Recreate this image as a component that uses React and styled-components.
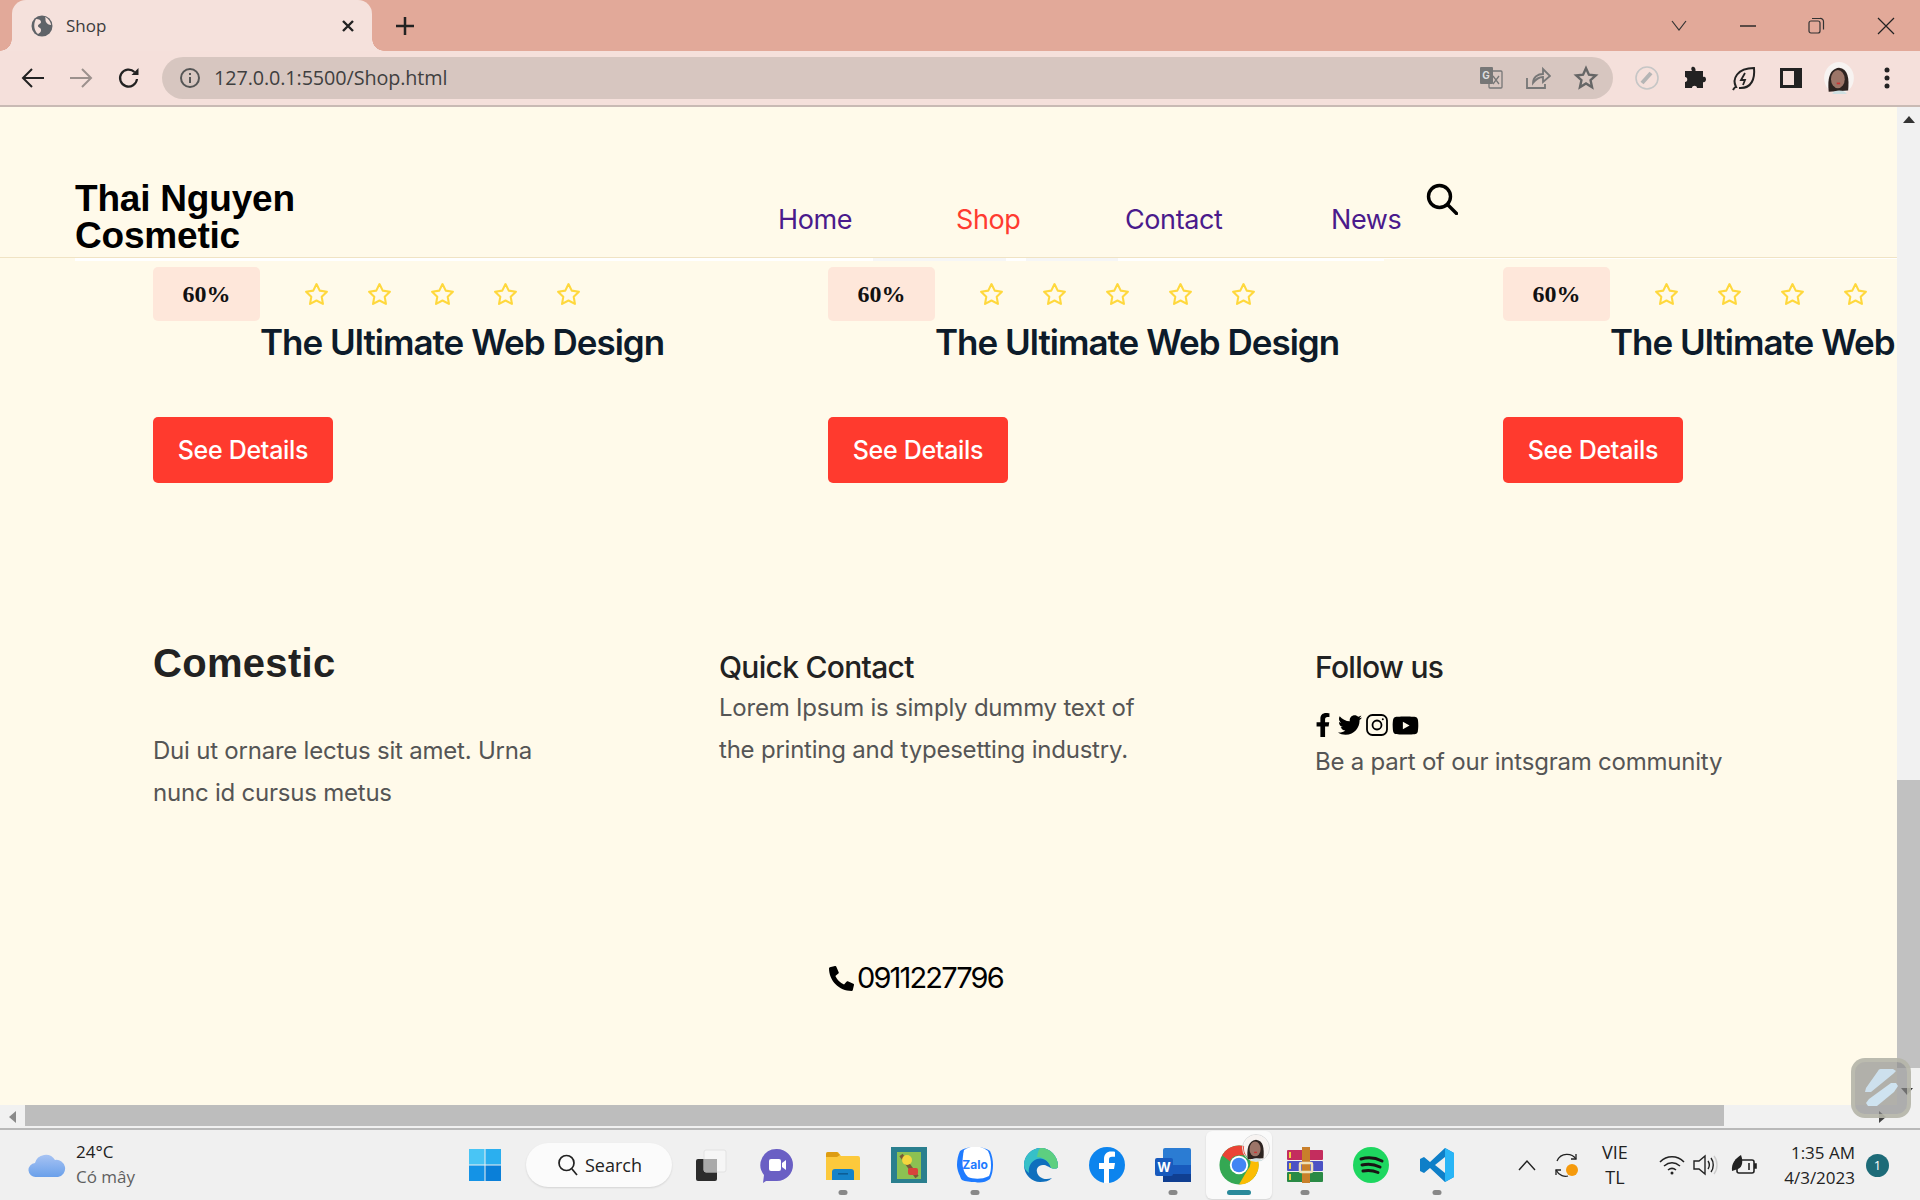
import React from "react";
import styled, { createGlobalStyle } from "styled-components";
import { FaFacebookF, FaTwitter, FaYoutube, FaPhoneAlt } from "react-icons/fa";
import { FiStar } from "react-icons/fi";

const Global = createGlobalStyle`
  html, body { margin: 0; padding: 0; height: 100%; overflow: hidden; }
  #root { height: 100%; }
  * { box-sizing: border-box; }
`;

const Screen = styled.div`
  width: 1920px; height: 1200px; display: flex; flex-direction: column;
  font-family: "Inter", "Liberation Sans", sans-serif; position: relative; overflow: hidden;
`;
const TabStrip = styled.div`
  height: 51px; background: #e2a999; display: flex; align-items: flex-end; padding-left: 12px; flex-shrink: 0;
`;
const Tab = styled.div`
  width: 360px; height: 51px; background: #f5e1dc; border-radius: 14px 14px 0 0; display: flex; align-items: center;
  padding: 0 17px 0 19px; position: relative; gap: 13px; color: #3c3c3c;
  font: 17px "Open Sans", sans-serif;
  &::before, &::after { content: ""; position: absolute; bottom: 0; width: 12px; height: 12px; }
  &::before { left: -12px; background: radial-gradient(circle at 0 0, #e2a999 11.5px, #f5e1dc 12px); }
  &::after { right: -12px; background: radial-gradient(circle at 100% 0, #e2a999 11.5px, #f5e1dc 12px); }
`;
const TabTitle = styled.span`flex: 1;`;
const NewTab = styled.div`margin-left: 19px; width: 28px; height: 51px; display: flex; align-items: center; justify-content: center;`;
const WinControls = styled.div`margin-left: auto; display: flex; align-items: center; height: 51px;`;
const WinBtn = styled.div`width: 69px; height: 44px; display: flex; align-items: center; justify-content: center;`;

const Toolbar = styled.div`
  height: 56px; background: #f5e0db; border-bottom: 2px solid #c9bab4; display: flex; align-items: center; flex-shrink: 0; padding: 0 0 1px 9px;
`;
const NavGlyph = styled.div`width: 48px; height: 40px; display: flex; align-items: center; justify-content: center;`;
const Omnibox = styled.div`
  width: 1451px; height: 42px; background: #d7c6c0; border-radius: 21px; margin-left: 9px; display: flex; align-items: center;
  padding: 0 14px 0 17px; color: #3f3f3f; font: 19.8px "Open Sans", sans-serif; gap: 13px;
`;
const Url = styled.span`flex: 1; letter-spacing: -0.1px;`;
const OmniIcons = styled.div`display: flex; align-items: center; gap: 22px;`;
const Extensions = styled.div`display: flex; align-items: center; margin-left: 10px;`;
const ExtSlot = styled.div`width: 48px; display: flex; align-items: center; justify-content: center;`;

const Viewport = styled.div`flex: 1; display: flex; min-height: 0; background: #fffaea;`;
const Content = styled.main`flex: 1; min-width: 0; overflow: hidden; display: flex; flex-direction: column;`;
const Header = styled.header`
  height: 151px; flex-shrink: 0; border-bottom: 1px solid #f0e3c4; padding: 73px 0 0 75px; display: flex; position: relative;
`;
const Logo = styled.div`
  width: 300px; font: 700 37px/37px "Liberation Sans", sans-serif; color: #000; letter-spacing: -0.2px; margin-right: 403px;
`;
const Nav = styled.nav`display: flex; align-items: flex-start; padding-top: 23px;`;
const NavLink = styled.a`
  font-size: 27px; font-weight: 400; line-height: 34px; color: ${p => (p.$active ? "#ff3b30" : "#4a1a8c")}; width: ${p => p.$w}px; letter-spacing: -0.4px;
`;
const SearchWrap = styled.div`margin-top: -20px;`;
const WhiteLine = styled.div`
  height: 3px; flex-shrink: 0; margin-left: 75px;
  background:
    linear-gradient(rgba(0,0,0,.035) 0 0) 798px 0 / 133px 3px no-repeat,
    linear-gradient(rgba(0,0,0,.035) 0 0) 951px 0 / 92px 3px no-repeat,
    linear-gradient(#fff 0 0) 0 0 / 1309px 3px no-repeat,
    linear-gradient(#fff 0 0) 0 0 / 100% 1px no-repeat;
`;

const CardRow = styled.section`display: flex; padding: 6px 0 0 153px; flex-shrink: 0;`;
const Card = styled.article`width: 675px; flex-shrink: 0; display: flex; flex-direction: column;`;
const TopLine = styled.div`display: flex; align-items: center; height: 54px;`;
const Badge = styled.div`
  width: 107px; height: 54px; border-radius: 5px; background: #fee7da; display: flex; align-items: center; justify-content: center;
  font: 700 24px "Liberation Serif", serif; color: #111; flex-shrink: 0;
`;
const Stars = styled.div`display: flex; margin-left: 44px; gap: 38px; color: #ffd83d;`;
const Title = styled.h3`
  margin: 0 0 0 107px; white-space: nowrap; font-size: 35px; font-weight: 600; line-height: 42px; color: #0d1b2a; letter-spacing: -1px;
`;
const DetailsButton = styled.a`
  margin-top: 54px; width: 180px; height: 66px; background: #ff3a2e; border-radius: 5px; color: #fff; display: flex; align-items: center; justify-content: center;
  font-size: 25px; font-weight: 500; letter-spacing: -0.3px;
`;

const Footer = styled.footer`display: flex; padding: 165px 0 0 153px; flex-shrink: 0;`;
const Col = styled.div`width: ${p => p.$w}px; flex-shrink: 0;`;
const Brand = styled.h2`
  margin: -9px 0 43px; font: 700 40px/48px "Liberation Sans", sans-serif; color: #222; letter-spacing: 0.3px;
`;
const ColTitle = styled.h4`margin: 0 0 1px; font-size: 30px; font-weight: 500; line-height: 38px; color: #222; letter-spacing: -0.7px;`;
const Para = styled.p`margin: 0; font-size: 24px; line-height: 42px; color: #555; letter-spacing: -0.22px;`;
const ParaTight = styled(Para)`line-height: 36px; margin-top: 6px;`;
const Socials = styled.div`display: flex; align-items: center; gap: 3px; margin: 26px 0 0 -4px; height: 26px; color: #000;`;
const Phone = styled.div`
  display: flex; align-items: center; gap: 3px; margin: 146px 0 0 829px; font-size: 29px; line-height: 36px; font-weight: 400; color: #000; letter-spacing: -1.85px; flex-shrink: 0;
`;

const VScroll = styled.aside`width: 23px; background: #f1f1f1; display: flex; flex-direction: column; flex-shrink: 0; position: relative;`;
const ArrowTop = styled.div`height: 24px; display: flex; align-items: center; justify-content: center;`;
const VThumb = styled.div`margin-top: 649px; height: 288px; background: #c1c1c1;`;
const ArrowBottom = styled.div`flex: 1; display: flex; align-items: flex-end; justify-content: center; padding-bottom: 10px; padding-right: 3px;`;

const HScroll = styled.div`height: 23px; flex-shrink: 0; background: #f1f1f1; display: flex; align-items: stretch; position: relative;`;
const HArrow = styled.div`width: 25px; display: flex; align-items: center; justify-content: center;`;
const HThumb = styled.div`width: 1699px; background: #bdbdbd; margin-bottom: 2px;`;
const HRest = styled.div`flex: 1; display: flex; align-items: center; justify-content: flex-end; padding-right: 34px;`;

const Floater = styled.div`
  position: absolute; left: 1851px; top: 1058px; width: 60px; height: 60px; border-radius: 14px; background: rgba(140,140,140,.68);
  border: 4px solid rgba(190,190,175,.75); display: flex; align-items: center; justify-content: center;
`;

const Taskbar = styled.footer`
  height: 72px; flex-shrink: 0; background: #f0f0f0; border-top: 2px solid #b9b9b9; display: flex; align-items: center; position: relative; color: #1c1c1c;
  font-family: "Open Sans", sans-serif;
`;
const Weather = styled.div`display: flex; align-items: center; width: 452px; flex-shrink: 0; padding-left: 28px; gap: 10px;`;
const WeatherText = styled.div`font-size: 17px; line-height: 25px; color: #222; padding-bottom: 2px;`;
const Muted = styled.div`color: #5f5f5f;`;
const AppSlot = styled.div`
  width: 66px; height: 68px; flex-shrink: 0; display: flex; align-items: center; justify-content: center; position: relative; border-radius: 6px;
  background: ${p => (p.$active ? "#fafafa" : "transparent")};
  box-shadow: ${p => (p.$active ? "0 1px 2px rgba(0,0,0,.12)" : "none")};
  &::after {
    content: ""; display: ${p => (p.$dot ? "block" : "none")}; position: absolute; bottom: 4px; left: 50%; transform: translateX(-50%);
    height: 5px; border-radius: 3px; width: ${p => (p.$active ? 24 : 9)}px; background: ${p => (p.$active ? "#2a8a9b" : "#888")};
  }
`;
const AppRow = styled.div`display: flex; align-items: center; flex-shrink: 0;`;
const SearchPill = styled.div`
  width: 146px; height: 44px; margin: 0 6px 0 8px; flex-shrink: 0; border-radius: 22px; background: #fbfbfb; box-shadow: 0 1px 2px rgba(0,0,0,.12);
  display: flex; align-items: center; gap: 6px; padding-left: 31px; font-size: 18px; color: #222;
`;
const Tray = styled.div`display: flex; align-items: center; margin-left: 42px; flex-shrink: 0;`;
const TrayIcon = styled.div`width: ${p => p.$w}px; margin-left: ${p => p.$ml || 0}px; display: flex; align-items: center; justify-content: center;`;
const Lang = styled.div`width: 50px; text-align: center; font-size: 18px; line-height: 25px; color: #222;`;
const Clock = styled.div`width: 92px; text-align: right; font-size: 17px; line-height: 25px; color: #222; white-space: nowrap;`;
const NotifBadge = styled.div`
  width: 23px; height: 23px; border-radius: 50%; background: #1d6b78; color: #fff; font-size: 13px; display: flex; align-items: center; justify-content: center; margin-left: 11px;
`;

const Avatar = ({ s = 28 }) => (
  <svg width={s} height={s} viewBox="0 0 28 28"><ellipse cx="14" cy="14" rx="13" ry="14" fill="#f7f3f1" /><path d="M5 26c-1-10 0-20 9-21 8 1 9 9 8 20z" fill="#2d2320" /><ellipse cx="13" cy="15" rx="6" ry="8" fill="#9c7568" /><rect x="12" y="18" width="3" height="1.5" fill="#c33" /><path d="M8 28c2-4 10-4 13 0z" fill="#cfe0e2" /></svg>
);

const Sq = ({ children, w = 36, h = 36, vb = "0 0 36 36" }) => <svg width={w} height={h} viewBox={vb}>{children}</svg>;

const InstagramGlyph = () => (
  <svg width="24" height="24" viewBox="0 0 24 24" fill="none" stroke="#000" strokeWidth="1.800"><rect x="2" y="2" width="20" height="20" rx="5.500" /><circle cx="12" cy="12" r="4.500" /><circle cx="17.800" cy="6.200" r="1" fill="#000" stroke="none" /></svg>
);

const ChromeIcon = () => (
  <Sq w={44} h={44}>
    <circle cx="18" cy="18" r="16" fill="#34a853" />
    <path d="M18 2a16 16 0 0 1 13.900 8H18a8 8 0 0 0-7.400 5L4.200 10A16 16 0 0 1 18 2z" fill="#ea4335" />
    <path d="M31.900 10A16 16 0 0 1 18 34l6.900-12a8 8 0 0 0-.4-12z" fill="#fbbc04" />
    <circle cx="18" cy="18" r="7.500" fill="#fff" /><circle cx="18" cy="18" r="6" fill="#4285f4" />
  </Sq>
);

const Apps = () => (
  <AppRow>
    <AppSlot>
      <Sq><rect x="2" y="2" width="15.500" height="15.500" fill="#49c5f5" /><rect x="18.500" y="2" width="15.500" height="15.500" fill="#2bafef" /><rect x="2" y="18.500" width="15.500" height="15.500" fill="#1493e6" /><rect x="18.500" y="18.500" width="15.500" height="15.500" fill="#0a7fd8" /></Sq>
    </AppSlot>
    <SearchPill>
      <svg width="22" height="24" viewBox="0 0 22 24" fill="none" stroke="#222" strokeWidth="1.700"><circle cx="9.500" cy="10" r="7.500" /><path d="M15 16l5 6" /></svg>
      Search
    </SearchPill>
    <AppSlot>
      <Sq><rect x="3" y="12" width="21" height="22" rx="2" fill="#2c2c2c" /><rect x="11" y="3" width="22" height="22" rx="2" fill="#f6f6f6" stroke="#e2e2e2" /><rect x="11" y="12" width="13" height="13" fill="#aaa" /></Sq>
    </AppSlot>
    <AppSlot>
      <Sq><path d="M18 2a16 16 0 0 1 0 32H7l-3 2 1-8A16 16 0 0 1 18 2z" fill="#6a5fc4" /><rect x="10" y="12" width="12" height="12" rx="2" fill="#fff" /><path d="M23 16l4-3v10l-4-3z" fill="#fff" /></Sq>
    </AppSlot>
    <AppSlot $dot>
      <Sq><path d="M1 7a2 2 0 0 1 2-2h10l3 4h17a2 2 0 0 1 2 2v22H1z" fill="#fcc93c" /><path d="M1 7a2 2 0 0 1 2-2h9l3 3-3 2H1z" fill="#dd9c12" /><path d="M7 33v-8a3 3 0 0 1 3-3h16a3 3 0 0 1 3 3v8z" fill="#1583c9" /><rect x="13" y="26" width="10" height="1.600" fill="#0c5e96" /></Sq>
    </AppSlot>
    <AppSlot>
      <Sq><rect width="36" height="36" fill="#2a7f8e" /><rect x="6" y="5" width="24" height="27" fill="#8cc152" /><path d="M10 8l16 22" stroke="#7a5b37" strokeWidth="4" /><circle cx="16" cy="13" r="5" fill="#f5d63d" /><rect x="17" y="21" width="10" height="7" rx="2" fill="#d8433a" /></Sq>
    </AppSlot>
    <AppSlot $dot>
      <Sq><path d="M3 4a18 18 0 0 1 15-3 18 18 0 0 1 15 3c2 4 3 9 3 14s-1 10-3 14a18 18 0 0 1-15 3c-4 0-10-.5-13-2-1.500-1-2-5-3-6-1.500-4-2-7-2-9 0-5 1-10 3-14z" fill="#1f7bff" /><path d="M7 3a20 20 0 0 1 24 1c2 4 3 9 3 14 0 4-.5 8-2 11-8 4-16 3-21 1-1-1-3-3-4-6-1-3-1.500-5-1.500-7 0-5 .5-10 1.500-14z" fill="#fff" /><text x="18" y="22" textAnchor="middle" fontSize="12" fontWeight="700" fontFamily="Inter, sans-serif" fill="#1f7bff">Zalo</text></Sq>
    </AppSlot>
    <AppSlot>
      <Sq><path d="M35 19C35 9 27 1 18 1 8 1 1 9 1 18c0 10 8 17 16 17 5 0 9-1 12-4-8 3-14-1-15-6-1-3 1-7 6-7 4 0 5 2 8 3 4 1 7 1 7-2z" fill="#0f6fbd" /><path d="M1 18C1 9 8 1 18 1c9 0 17 8 17 18 0 3-3 3-7 2-2-7-8-11-14-9-6 2-9 8-8 14-3-2-5-5-5-8z" fill="#36c0c8" /><path d="M18 1c9 0 17 8 17 18 0 3-3 3-7 2-1-4-5-11-14-11 1-5 2-9 4-9z" fill="#6bd468" opacity=".75" /></Sq>
    </AppSlot>
    <AppSlot>
      <Sq><circle cx="18" cy="18" r="18" fill="#0c84ee" /><path d="M15 36V22h-5v-6h5v-4c0-5 3-7.500 7-7.500 2 0 3.500.2 4 .3v5h-3c-2.300 0-3 1.200-3 3v3.200h6l-1 6h-5v14z" fill="#fff" /></Sq>
    </AppSlot>
    <AppSlot $dot>
      <Sq><rect x="8" y="1" width="28" height="34" rx="2" fill="#2b7cd3" /><rect x="8" y="18" width="28" height="9" fill="#185abd" /><rect x="8" y="27" width="28" height="8" fill="#103f91" /><rect x="0" y="11" width="18" height="18" rx="2" fill="#185abd" /><text x="9" y="25" fontSize="13" fontWeight="700" fontFamily="Inter, sans-serif" textAnchor="middle" fill="#fff">W</text></Sq>
    </AppSlot>
    <AppSlot $active $dot>
      <ChromeIcon />
      <AvatarBadge><Avatar s={26} /></AvatarBadge>
    </AppSlot>
    <AppSlot $dot>
      <Sq><rect x="0" y="3" width="36" height="10" rx="1" fill="#c42d5e" /><rect x="0" y="14" width="36" height="10" rx="1" fill="#4b52c4" /><rect x="0" y="25" width="36" height="10" rx="1" fill="#2a8a45" /><rect x="2" y="5" width="2" height="6" fill="#f0d040" /><rect x="2" y="16" width="2" height="6" fill="#f0d040" /><rect x="2" y="27" width="2" height="6" fill="#f0d040" /><rect x="15" y="0" width="8" height="36" fill="#c9802a" /><rect x="13" y="16" width="12" height="9" rx="1" fill="none" stroke="#f0e2b8" strokeWidth="2.500" /></Sq>
    </AppSlot>
    <AppSlot>
      <Sq><circle cx="18" cy="18" r="18" fill="#1ed760" /><path d="M8 12c7-2 14-1.500 21 2M9 18c6-1.500 12-1 18 2M10 24c5-1 10-.7 15 1.500" fill="none" stroke="#191414" strokeWidth="3" strokeLinecap="round" /></Sq>
    </AppSlot>
    <AppSlot $dot>
      <Sq><path d="M26 1l9 5v24l-9 5-15-14-6 5-4-2V12l4-2 6 5z" fill="#0e7fc8" /><path d="M26 1l9 5v24l-9 5z" fill="#29b5f6" /><path d="M26 10v16l-10-8z" fill="#f0f0f0" /></Sq>
    </AppSlot>
  </AppRow>
);
const AvatarBadge = styled.div`position: absolute; top: 3px; right: 2px; display: flex; border: 1px solid #ddd; border-radius: 50%;`;

const products = [0, 1, 2];

export default function App() {
  return (
    <Screen>
      <Global />
      <TabStrip>
        <Tab>
          <svg width="22" height="22" viewBox="0 0 22 22"><circle cx="11" cy="11" r="10.500" fill="#5f6368" /><path d="M5 4c3 0 5 1 5 3s-3 2-3 4 3 1 3 4-2 3-3 4C3 16 2 9 5 4zM14 2c3 1 6 5 6 8-2 0-4-1-5-3s0-3-1-5z" fill="#f5e1dc" /></svg>
          <TabTitle>Shop</TabTitle>
          <svg width="14" height="14" viewBox="0 0 14 14" stroke="#222" strokeWidth="2.400"><path d="M2 2l10 10M12 2L2 12" /></svg>
        </Tab>
        <NewTab><svg width="20" height="20" viewBox="0 0 20 20" stroke="#222" strokeWidth="2.500"><path d="M10 1v18M1 10h18" /></svg></NewTab>
        <WinControls>
          <WinBtn><svg width="18" height="12" viewBox="0 0 18 12" fill="none" stroke="#333" strokeWidth="1.200"><path d="M2 1l7 9 7-9" /></svg></WinBtn>
          <WinBtn><svg width="18" height="4" viewBox="0 0 18 4" stroke="#222" strokeWidth="1.400"><path d="M1 2h16" /></svg></WinBtn>
          <WinBtn><svg width="17" height="17" viewBox="0 0 17 17" fill="none" stroke="#333" strokeWidth="1.200"><rect x="1" y="4" width="11" height="12" rx="2" /><path d="M4 1.500h8a3 3 0 0 1 3.500 3v8" /></svg></WinBtn>
          <WinBtn><svg width="18" height="18" viewBox="0 0 18 18" stroke="#222" strokeWidth="1.200"><path d="M1 1l16 16M17 1L1 17" /></svg></WinBtn>
        </WinControls>
      </TabStrip>

      <Toolbar>
        <NavGlyph><svg width="24" height="22" viewBox="0 0 24 22" fill="none" stroke="#222" strokeWidth="2"><path d="M23 11H3M11 2l-9 9 9 9" /></svg></NavGlyph>
        <NavGlyph><svg width="24" height="22" viewBox="0 0 24 22" fill="none" stroke="#9c918d" strokeWidth="2"><path d="M1 11h20M13 2l9 9-9 9" /></svg></NavGlyph>
        <NavGlyph><svg width="24" height="24" viewBox="0 0 24 24" fill="none" stroke="#222" strokeWidth="2.200"><path d="M20 13a8.500 8.500 0 1 1-2.500-7" /><path d="M21.500 2v7h-7" fill="#222" stroke="none" /></svg></NavGlyph>
        <Omnibox>
          <svg width="22" height="22" viewBox="0 0 22 22" fill="none" stroke="#555" strokeWidth="2"><circle cx="11" cy="11" r="9" /><path d="M11 10v6M11 6v2" /></svg>
          <Url>127.0.0.1:5500/Shop.html</Url>
          <OmniIcons>
            <svg width="24" height="24" viewBox="0 0 24 24"><rect x="1" y="1" width="13" height="17" rx="1" fill="#777" /><rect x="10" y="5" width="13" height="17" rx="1" fill="none" stroke="#777" strokeWidth="1.300" /><text x="7" y="13" fontSize="10" fontWeight="700" fill="#ddd" fontFamily="Inter, sans-serif" textAnchor="middle">G</text><path d="M14 10l6 8M20 10l-6 8" stroke="#777" strokeWidth="1.300" /></svg>
            <svg width="26" height="24" viewBox="0 0 26 24" fill="none" stroke="#777" strokeWidth="1.800"><path d="M2 12v10h18v-4" /><path d="M8 17c0-6 5-9 10-9V3l7 7-7 6v-5c-4 0-7 2-10 6z" /></svg>
            <svg width="26" height="26" viewBox="0 0 24 24" fill="none" stroke="#666" strokeWidth="2.200"><path d="M12 3l2.700 6 6.300.7-4.800 4.300 1.400 6.500L12 17l-5.600 3.500 1.400-6.500L3 9.700 9.300 9z" /></svg>
          </OmniIcons>
        </Omnibox>
        <Extensions>
          <ExtSlot><svg width="26" height="26" viewBox="0 0 26 26" fill="none"><circle cx="13" cy="13" r="11" stroke="#c6c6c6" strokeWidth="1.600" /><path d="M8 18l9-10" stroke="#b5b5b5" strokeWidth="4" /></svg></ExtSlot>
          <ExtSlot><svg width="22" height="24" viewBox="0 0 22 24"><path d="M8 1c2-1 4 1 3.500 4H19v6c2-1 3 .5 3 2.500S20 17 19 16v6h-6c0-3-5-3-5 0H1v-6c3 0 3-5 0-5V5h7C7 3 7 2 8 1z" fill="#222" /></svg></ExtSlot>
          <ExtSlot><svg width="26" height="26" viewBox="0 0 26 26" fill="none" stroke="#222" strokeWidth="2"><path d="M3 25c1-2 2-3 3-3C2 14 7 3 24 3c1 10-2 21-15 20" /><path d="M15 8l-4 7h4l-2 5" strokeWidth="1.800" /></svg></ExtSlot>
          <ExtSlot><svg width="22" height="22" viewBox="0 0 22 22"><rect x="1.500" y="2.500" width="19" height="17" fill="none" stroke="#222" strokeWidth="3" /><rect x="14" y="2" width="7" height="18" fill="#222" /></svg></ExtSlot>
          <ExtSlot><Avatar s={32} /></ExtSlot>
          <ExtSlot><svg width="6" height="22" viewBox="0 0 6 22" fill="#222"><circle cx="3" cy="3" r="2.500" /><circle cx="3" cy="11" r="2.500" /><circle cx="3" cy="19" r="2.500" /></svg></ExtSlot>
        </Extensions>
      </Toolbar>

      <Viewport>
        <Content>
          <Header>
            <Logo>Thai Nguyen Cosmetic</Logo>
            <Nav>
              <NavLink $w={178}>Home</NavLink>
              <NavLink $active $w={169}>Shop</NavLink>
              <NavLink $w={206}>Contact</NavLink>
              <NavLink $w={95}>News</NavLink>
              <SearchWrap>
                <svg width="32" height="32" viewBox="0 0 32 32" fill="none" stroke="#000" strokeWidth="3.400" strokeLinecap="round"><circle cx="13.500" cy="13.500" r="11" /><path d="M22 22l8.500 8.500" /></svg>
              </SearchWrap>
            </Nav>
          </Header>
          <WhiteLine />
          <CardRow>
            {products.map(i => (
              <Card key={i}>
                <TopLine>
                  <Badge>60%</Badge>
                  <Stars>
                    {[0, 1, 2, 3, 4].map(s => <FiStar key={s} size={25} />)}
                  </Stars>
                </TopLine>
                <Title>The Ultimate Web Design</Title>
                <DetailsButton>See Details</DetailsButton>
              </Card>
            ))}
          </CardRow>
          <Footer>
            <Col $w={566}>
              <Brand>Comestic</Brand>
              <Para>Dui ut ornare lectus sit amet. Urna<br />nunc id cursus metus</Para>
            </Col>
            <Col $w={596}>
              <ColTitle>Quick Contact</ColTitle>
              <Para>Lorem Ipsum is simply dummy text of<br />the printing and typesetting industry.</Para>
            </Col>
            <Col $w={500}>
              <ColTitle>Follow us</ColTitle>
              <Socials>
                <FaFacebookF size={24} />
                <FaTwitter size={24} />
                <InstagramGlyph />
                <FaYoutube size={27} />
              </Socials>
              <ParaTight>Be a part of our intsgram community</ParaTight>
            </Col>
          </Footer>
          <Phone><FaPhoneAlt size={25} />0911227796</Phone>
        </Content>
        <VScroll>
          <ArrowTop><svg width="12" height="7" viewBox="0 0 12 7" fill="#333"><path d="M6 0l6 7H0z" /></svg></ArrowTop>
          <VThumb />
          <ArrowBottom><svg width="12" height="7" viewBox="0 0 12 7" fill="#333"><path d="M0 0h12L6 7z" /></svg></ArrowBottom>
        </VScroll>
      </Viewport>

      <HScroll>
        <HArrow><svg width="7" height="12" viewBox="0 0 7 12" fill="#8a8a8a"><path d="M7 0v12L0 6z" /></svg></HArrow>
        <HThumb />
        <HRest><svg width="7" height="12" viewBox="0 0 7 12" fill="#444"><path d="M0 0v12l7-6z" /></svg></HRest>
      </HScroll>

      <Floater>
        <svg width="36" height="38" viewBox="0 0 36 38" fill="#cfe3f0"><path d="M15 2a3 3 0 0 1 3-2h12l3 2-3 3-22 18H2l1-4z" opacity=".95" /><path d="M28 14h5l2 3-4 6-17 14H5l-2-3 3-4z" /></svg>
      </Floater>

      <Taskbar>
        <Weather>
          <svg width="38" height="28" viewBox="0 0 38 28"><defs><linearGradient id="cl" x1="0" y1="0" x2="0" y2="1"><stop offset="0" stopColor="#a7c3f3" /><stop offset="1" stopColor="#6aa0ea" /></linearGradient></defs><path d="M8 26a7 7 0 0 1-1-14 11 11 0 0 1 20-3 8.500 8.500 0 0 1 3 17z" fill="url(#cl)" /></svg>
          <WeatherText>24°C<Muted>Có mây</Muted></WeatherText>
        </Weather>
        <Apps />
        <Tray>
          <TrayIcon $w={30}><svg width="20" height="12" viewBox="0 0 20 12" fill="none" stroke="#222" strokeWidth="1.400"><path d="M2 11l8-9 8 9" /></svg></TrayIcon>
          <TrayIcon $w={48}><svg width="26" height="26" viewBox="0 0 26 26" fill="none" stroke="#222" strokeWidth="1.300"><path d="M23 7C19 1 8 0 4 9" /><path d="M23 2v5h-5" /><path d="M3 18c3 6 9 7 12 6" /><path d="M3 23v-5h5" /><circle cx="19" cy="18" r="6" fill="#f59a0c" stroke="none" /></svg></TrayIcon>
          <Lang>VIE<br />TL</Lang>
          <TrayIcon $w={30} $ml={17}><svg width="26" height="20" viewBox="0 0 26 20" fill="none" stroke="#222" strokeWidth="1.600"><path d="M1 7c7-7 17-7 24 0M5 11c5-4 11-4 16 0M9 15c2.500-2 5.500-2 8 0" /><circle cx="13" cy="18" r="1.500" fill="#222" stroke="none" /></svg></TrayIcon>
          <TrayIcon $w={38}><svg width="26" height="22" viewBox="0 0 26 22" fill="none" stroke="#222" strokeWidth="1.400"><path d="M1 7h5l6-5v18l-6-5H1z" /><path d="M15 7c2 3 2 5 0 8M18 4c3 4 3 10 0 14" /><path d="M21 2c4 5 4 13 0 18" stroke="#ccc" /></svg></TrayIcon>
          <TrayIcon $w={38}><svg width="26" height="22" viewBox="0 0 26 22" fill="none" stroke="#222" strokeWidth="1.600"><rect x="6" y="6" width="17" height="13" rx="2" /><path d="M23 10h2v4h-2" fill="#222" /><path d="M1 17C0 9 5 4 10 1c2 5 2 12-3 14z" fill="#222" stroke="none" /><path d="M18 9v7" /></svg></TrayIcon>
          <Clock>1:35 AM<br />4/3/2023</Clock>
          <NotifBadge>1</NotifBadge>
        </Tray>
      </Taskbar>
    </Screen>
  );
}
